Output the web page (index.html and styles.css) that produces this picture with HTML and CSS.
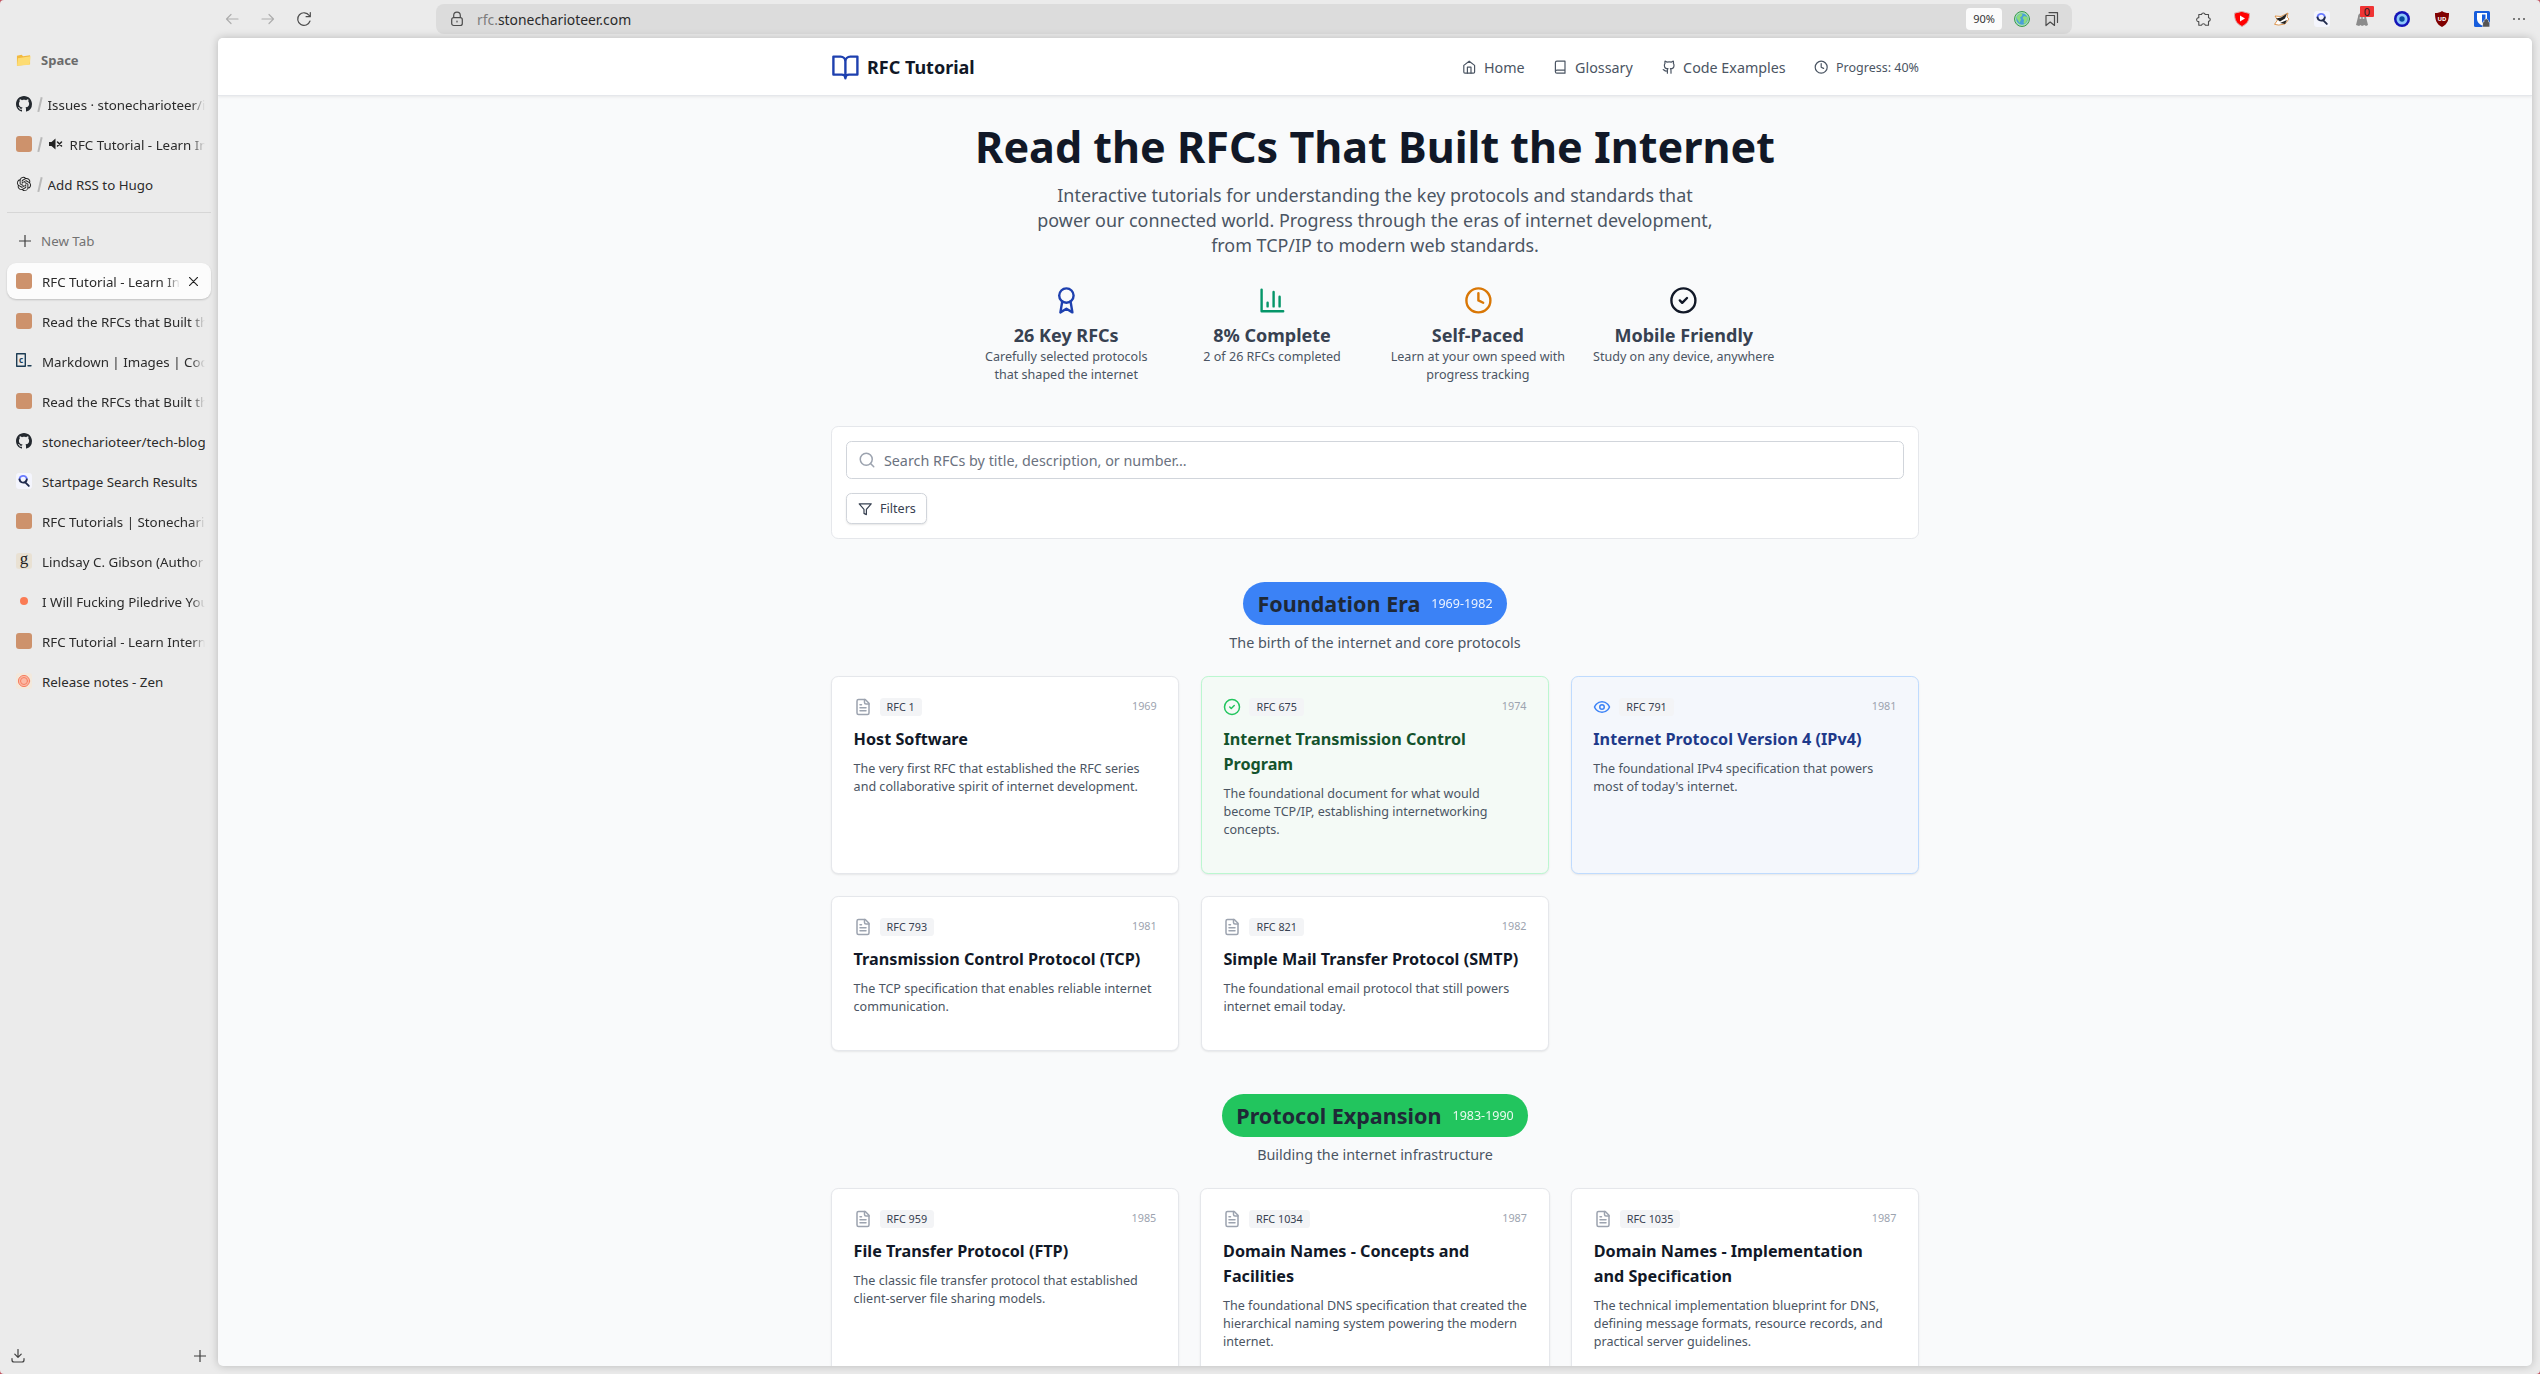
FILE: index.html
```html
<!DOCTYPE html>
<html lang="en">
<head>
<meta charset="utf-8">
<title>RFC Tutorial</title>
<link rel="stylesheet" href="styles.css">
</head>
<body>
<svg width="0" height="0" class="defs">
<symbol id="file" viewBox="0 0 24 24"><path d="M15 2H6a2 2 0 0 0-2 2v16a2 2 0 0 0 2 2h12a2 2 0 0 0 2-2V7Z"/><path d="M14 2v4a2 2 0 0 0 2 2h4M10 9H8M16 13H8M16 17H8"/></symbol>
<symbol id="check" viewBox="0 0 24 24"><circle cx="12" cy="12" r="10"/><path d="m9 12 2 2 4-4"/></symbol>
<symbol id="clock" viewBox="0 0 24 24"><circle cx="12" cy="12" r="10"/><path d="M12 6v6l4 2"/></symbol>
<symbol id="github" viewBox="0 0 16 16"><path fill="#24292f" stroke="none" d="M8 0C3.58 0 0 3.58 0 8c0 3.54 2.29 6.53 5.47 7.59.4.07.55-.17.55-.38 0-.19-.01-.82-.01-1.49-2.01.37-2.53-.49-2.69-.94-.09-.23-.48-.94-.82-1.13-.28-.15-.68-.52-.01-.53.63-.01 1.08.58 1.23.82.72 1.21 1.87.87 2.33.66.07-.52.28-.87.51-1.07-1.78-.2-3.64-.89-3.64-3.95 0-.87.31-1.59.82-2.15-.08-.2-.36-1.02.08-2.12 0 0 .67-.21 2.2.82.64-.18 1.32-.27 2-.27s1.36.09 2 .27c1.53-1.04 2.2-.82 2.2-.82.44 1.1.16 1.92.08 2.12.51.56.82 1.27.82 2.15 0 3.07-1.87 3.75-3.65 3.95.29.25.54.73.54 1.48 0 1.07-.01 1.93-.01 2.2 0 .21.15.46.55.38A8.01 8.01 0 0 0 16 8c0-4.42-3.58-8-8-8"/></symbol>
<symbol id="startpage" viewBox="0 0 16 16"><rect width="16" height="16" rx="3" fill="#f4f5fd" stroke="none"/><path d="M3.500 6.500a3.700 3.700 0 0 1 7.300-.8" stroke="#6b7cff" stroke-width="1.800"/><path d="M3.500 6.500a3.700 3.700 0 0 0 5.500 2.600l3.800 3.800M9 9.100a3.700 3.700 0 0 0 1.800-2.600" stroke="#202b4d" stroke-width="1.900"/></symbol>
</svg>
<div class="browser">
<div class="toolbar">
  <div class="navbtns">
    <svg class="i dim" viewBox="0 0 16 16"><path d="M14 8H2.500M7 3.500 2.500 8 7 12.500"/></svg>
    <svg class="i dim" viewBox="0 0 16 16"><path d="M2 8h11.500M9 3.500 13.500 8 9 12.500"/></svg>
    <svg class="i" viewBox="0 0 16 16"><path d="M13.200 4.500A6.300 6.300 0 1 0 14 10M14.300 1.500v4.200h-4.200"/></svg>
  </div>
  <div class="urlbar">
    <svg class="i lock" viewBox="0 0 16 16"><rect x="2.700" y="6.700" width="10.600" height="7.800" rx="2"/><path d="M4.700 6.500V4.500a3.300 3.300 0 0 1 6.600 0v2M8 10v1"/></svg>
    <span class="url"><span class="sub">rfc.</span>stonecharioteer.com</span>
    <span class="zoomlvl">90%</span>
    <svg class="globe" viewBox="0 0 16 16"><circle cx="8" cy="8" r="7.500" fill="#a9dfb4" stroke="#3a9a50"/><circle cx="8" cy="8" r="5.800" fill="#4a9fd8"/><path d="M2.500 7C3 4 6 2 8.500 2.500L8 5 6 6.500 7 8.500 5.500 12 4 9.500ZM10 5l3.500 1v3L11 13l-1.500-1 .5-3-1.500-2Z" fill="#8bdc7c"/></svg>
    <svg class="i" viewBox="0 0 16 16"><path d="M2 4.500h8.500v10L6.200 11 2 14.500ZM5 1.600h8.500v9.900"/></svg>
  </div>
  <div class="exts">
    <svg class="puzzle" viewBox="0 0 16 16"><path class="ln" d="M5.500 3.500a1.900 1.900 0 0 1 3.700 0h3.300v3.200h.300a1.900 1.900 0 0 1 0 3.700h-.300v3.800H9.300a1.900 1.900 0 0 0-3.700 0H2.800v-3.600a1.900 1.900 0 0 1-.500-3.800h.500V3.500Z"/></svg>
    <svg viewBox="0 0 16 16"><path fill="#f00" stroke="#d8aaaa" d="M8 .5 15.500 2.500c0 6-1.500 10-7.500 13C2 12.500.5 8.500.5 2.500Z"/><path fill="#fff" d="m6 4.500 5 3-5 3z"/></svg>
    <svg viewBox="0 0 16 16"><path d="M.8 13 3.500 9 1 5l6 .5L14 2l-1 4 2 2-4 5-6 1Z" fill="#fff" stroke="#d9822b" stroke-width=".8"/><path d="m2 7.500 5-1 6-4-2 5-5 3ZM6 12l7-3-2 4Z" fill="#222"/></svg>
    <svg viewBox="0 0 16 16"><use href="#startpage"/></svg>
    <span class="ghostbox"><svg viewBox="0 0 16 16"><path d="M2 14 4 6a4 4 0 0 1 8 0l2 8-2 1-1.500-1L8 15l-1.500-1L5 15Z" fill="#8b8b8b"/><circle cx="6.500" cy="7" r="1" fill="#ddd"/><circle cx="9.500" cy="7" r="1" fill="#ddd"/></svg><b class="count">0</b></span>
    <svg viewBox="0 0 16 16"><circle cx="8" cy="8" r="8" fill="#1414b8"/><circle cx="8" cy="8" r="5.500" fill="#8dc6fa"/><circle cx="8" cy="8" r="2.700" fill="#064a9c"/></svg>
    <svg viewBox="0 0 16 16"><path fill="#800000" d="M8 0c2 1.500 4 2 7 2 0 6-1 11-7 14C2 13 1 8 1 2 4 2 6 1.500 8 0Z"/><text x="8" y="9.500" class="ub">UD</text></svg>
    <svg viewBox="0 0 16 16"><rect width="16" height="16" rx="1.500" fill="#175ddc"/><path fill="#fff" d="M3 2h10v6c0 3-2 5-5 6.500C5 13 3 11 3 8Z"/><path fill="#175ddc" d="M8 3.500h3.500v5L8 12.500Z"/><path fill="#555" stroke="#ddd" stroke-width=".6" d="M9 11h1V9.500q2.200-3.500 4.500 0V11h1v5H9Z"/></svg>
    <svg class="dots" viewBox="0 0 16 16"><g fill="#555"><circle cx="3" cy="8" r="1"/><circle cx="8" cy="8" r="1"/><circle cx="13" cy="8" r="1"/></g></svg>
  </div>
</div>
<div class="main">
<aside class="side">
  <div class="space"><svg viewBox="0 0 16 14"><path d="M1 2.500 6 1.500 7.500 3 15 2v9.500L1 13Z" fill="#f2b93e"/><path d="m1 13 1-8 13.500-2-1 9Z" fill="#fddc73"/></svg>Space</div>
  <div class="pins">
    <div class="tab"><svg class="fav"><use href="#github"/></svg><i class="sl"></i><span class="t">Issues · stonecharioteer/iss</span></div>
    <div class="tab"><i class="fav sq"></i><i class="sl"></i><svg class="mute" viewBox="0 0 14 12"><path d="M0 4h2.500L6.500.5v11L2.500 8H0Z" fill="#222"/><path d="m8.500 4 4 4m0-4-4 4" stroke="#222" stroke-width="1.500"/></svg><span class="t">RFC Tutorial - Learn Internet</span></div>
    <div class="tab"><svg class="fav oa" viewBox="-1.500 -1.500 27 27"><path d="M22.2819 9.8211a5.9847 5.9847 0 0 0-.5157-4.9108 6.0462 6.0462 0 0 0-6.5098-2.9A6.0651 6.0651 0 0 0 4.9807 4.1818a5.9847 5.9847 0 0 0-3.9977 2.9 6.0462 6.0462 0 0 0 .7427 7.0966 5.98 5.98 0 0 0 .511 4.9107 6.051 6.051 0 0 0 6.5146 2.9001A5.9847 5.9847 0 0 0 13.2599 24a6.0557 6.0557 0 0 0 5.7718-4.2058 5.9894 5.9894 0 0 0 3.9977-2.9001 6.0557 6.0557 0 0 0-.7475-7.0729zm-9.022 12.6081a4.4755 4.4755 0 0 1-2.8764-1.0408l.1419-.0804 4.7783-2.7582a.7948.7948 0 0 0 .3927-.6813v-6.7369l2.02 1.1686a.071.071 0 0 1 .038.052v5.5826a4.504 4.504 0 0 1-4.4945 4.4944zm-9.6607-4.1254a4.4708 4.4708 0 0 1-.5346-3.0137l.142.0852 4.783 2.7582a.7712.7712 0 0 0 .7806 0l5.8428-3.3685v2.3324a.0804.0804 0 0 1-.0332.0615L9.74 19.9502a4.4992 4.4992 0 0 1-6.1408-1.6464zM2.3408 7.8956a4.485 4.485 0 0 1 2.3655-1.9728V11.6a.7664.7664 0 0 0 .3879.6765l5.8144 3.3543-2.0201 1.1685a.0757.0757 0 0 1-.071 0l-4.8303-2.7865A4.504 4.504 0 0 1 2.3408 7.872zm16.5963 3.8558L13.1038 8.364 15.1192 7.2a.0757.0757 0 0 1 .071 0l4.8303 2.7913a4.4944 4.4944 0 0 1-.6765 8.1042v-5.6772a.79.79 0 0 0-.407-.667zm2.0107-3.0231l-.142-.0852-4.7735-2.7818a.7759.7759 0 0 0-.7854 0L9.409 9.2297V6.8974a.0662.0662 0 0 1 .0284-.0615l4.8303-2.7866a4.4992 4.4992 0 0 1 6.6802 4.66zM8.3065 12.863l-2.02-1.1638a.0804.0804 0 0 1-.038-.0567V6.0742a4.4992 4.4992 0 0 1 7.3757-3.4537l-.142.0805L8.704 5.459a.7948.7948 0 0 0-.3927.6813zm1.0976-2.3654l2.602-1.4998 2.6069 1.4998v2.9994l-2.5974 1.4997-2.6067-1.4997Z"/></svg><i class="sl"></i><span class="t nf">Add RSS to Hugo</span></div>
  </div>
  <div class="newtab"><svg viewBox="0 0 12 12"><path d="M6 0v12M0 6h12"/></svg>New Tab</div>
  <div class="tab active"><i class="fav sq"></i><span class="t">RFC Tutorial - Learn Inte</span><svg class="x" viewBox="0 0 10 10"><path d="m.5.5 9 9m0-9-9 9"/></svg></div>
  <div class="tab"><i class="fav sq"></i><span class="t">Read the RFCs that Built the</span></div>
  <div class="tab"><svg class="fav" viewBox="0 0 16 16"><path d="M.700.700h8.600v12.600H.700ZM12 12.800h3" fill="none" stroke="#1c3c54" stroke-width="1.400"/><text x="5" y="10" class="cc">c</text></svg><span class="t">Markdown | Images | Codec</span></div>
  <div class="tab"><i class="fav sq"></i><span class="t">Read the RFCs that Built the</span></div>
  <div class="tab"><svg class="fav"><use href="#github"/></svg><span class="t nf">stonecharioteer/tech-blog</span></div>
  <div class="tab"><svg class="fav"><use href="#startpage"/></svg><span class="t nf">Startpage Search Results</span></div>
  <div class="tab"><i class="fav sq"></i><span class="t">RFC Tutorials | Stonechariot</span></div>
  <div class="tab"><i class="fav gr">g</i><span class="t">Lindsay C. Gibson (Author o</span></div>
  <div class="tab"><svg class="fav" viewBox="0 0 16 16"><circle cx="8" cy="8" r="4" fill="#fa7b54"/></svg><span class="t">I Will Fucking Piledrive You I</span></div>
  <div class="tab"><i class="fav sq"></i><span class="t">RFC Tutorial - Learn Internet</span></div>
  <div class="tab"><svg class="fav" viewBox="0 0 16 16"><rect width="16" height="16" rx="3" fill="#f3e9dc"/><g fill="#fbb9a4" stroke="#f77f61"><circle cx="8" cy="8" r="5.600"/><circle cx="8" cy="8" r="3.500"/></g></svg><span class="t nf">Release notes - Zen</span></div>
  <div class="bottom"><svg viewBox="0 0 14 14"><path d="M7 .500v7.500M3.800 5.200 7 8.400l3.200-3.200M1 9.500v1.500a2 2 0 0 0 2 2h8a2 2 0 0 0 2-2V9.500"/></svg><svg viewBox="0 0 12 12"><path d="M6 0v12M0 6h12"/></svg></div>
</aside>
<div class="page">
  <header class="top"><div class="wrap bar">
    <div class="brand"><svg viewBox="0 0 24 24"><path d="M2 3h6a4 4 0 0 1 4 4v14a3 3 0 0 0-3-3H2zM22 3h-6a4 4 0 0 0-4 4v14a3 3 0 0 1 3-3h7z"/></svg>RFC Tutorial</div>
    <nav>
      <a><svg viewBox="0 0 24 24"><path d="m3 9 9-7 9 7v11a2 2 0 0 1-2 2H5a2 2 0 0 1-2-2z"/><path d="M9 22V12h6v10"/></svg>Home</a>
      <a><svg viewBox="0 0 24 24"><path d="M4 19.500v-15A2.500 2.500 0 0 1 6.500 2H20v20H6.500a2.500 2.500 0 0 1 0-5H20"/></svg>Glossary</a>
      <a><svg viewBox="0 0 24 24"><path d="M15 22v-4a4.800 4.800 0 0 0-1-3.500c3 0 6-2 6-5.500.08-1.250-.27-2.480-1-3.500.28-1.150.28-2.350 0-3.500 0 0-1 0-3 1.500-2.640-.5-5.360-.5-8 0C6 2 5 2 5 2c-.3 1.150-.3 2.350 0 3.500A5.403 5.403 0 0 0 4 9c0 3.500 3 5.500 6 5.500-.39.490-.68 1.050-.85 1.650-.17.600-.22 1.230-.15 1.850v4"/><path d="M9 18c-4.510 2-5-2-7-2"/></svg>Code Examples</a>
      <a class="prog"><svg><use href="#clock"/></svg>Progress: 40%</a>
    </nav>
  </div></header>
  <main class="wrap">
    <h1>Read the RFCs That Built the Internet</h1>
    <p class="lead">Interactive tutorials for understanding the key protocols and standards that<br>power our connected world. Progress through the eras of internet development,<br>from TCP/IP to modern web standards.</p>
    <div class="stats">
      <div><svg class="blue" viewBox="0 0 24 24"><circle cx="12" cy="8" r="6"/><path d="M15.477 12.890 17 22l-5-3-5 3 1.523-9.110"/></svg><h3>26 Key RFCs</h3><p>Carefully selected protocols that shaped the internet</p></div>
      <div><svg class="green" viewBox="0 0 24 24"><path d="M3 3v18h18M18 17V9M13 17V5M8 17v-3"/></svg><h3>8% Complete</h3><p>2 of 26 RFCs completed</p></div>
      <div><svg class="amber"><use href="#clock"/></svg><h3>Self-Paced</h3><p>Learn at your own speed with progress tracking</p></div>
      <div><svg class="dark"><use href="#check"/></svg><h3>Mobile Friendly</h3><p>Study on any device, anywhere</p></div>
    </div>
    <div class="search">
      <div class="field"><svg viewBox="0 0 24 24"><circle cx="11" cy="11" r="8"/><path d="m21 21-4.300-4.300"/></svg>Search RFCs by title, description, or number...</div>
      <button class="filters"><svg viewBox="0 0 24 24"><path d="M22 3H2l8 9.460V19l4 2v-8.540Z"/></svg>Filters</button>
    </div>
    <section class="era">
      <h2 class="pill p1">Foundation Era<span>1969-1982</span></h2>
      <p class="esub">The birth of the internet and core protocols</p>
      <div class="grid g1">
        <article class="card"><div class="meta"><svg><use href="#file"/></svg><span class="tag">RFC 1</span><time>1969</time></div><h4>Host Software</h4><p>The very first RFC that established the RFC series and collaborative spirit of internet development.</p></article>
        <article class="card done"><div class="meta"><svg><use href="#check"/></svg><span class="tag">RFC 675</span><time>1974</time></div><h4>Internet Transmission Control Program</h4><p>The foundational document for what would become TCP/IP, establishing internetworking concepts.</p></article>
        <article class="card seen"><div class="meta"><svg viewBox="0 0 24 24"><path d="M2 12s3-7 10-7 10 7 10 7-3 7-10 7-10-7-10-7Z"/><circle cx="12" cy="12" r="3"/></svg><span class="tag">RFC 791</span><time>1981</time></div><h4>Internet Protocol Version 4 (IPv4)</h4><p>The foundational IPv4 specification that powers most of today's internet.</p></article>
        <article class="card"><div class="meta"><svg><use href="#file"/></svg><span class="tag">RFC 793</span><time>1981</time></div><h4>Transmission Control Protocol (TCP)</h4><p>The TCP specification that enables reliable internet communication.</p></article>
        <article class="card"><div class="meta"><svg><use href="#file"/></svg><span class="tag">RFC 821</span><time>1982</time></div><h4>Simple Mail Transfer Protocol (SMTP)</h4><p>The foundational email protocol that still powers internet email today.</p></article>
      </div>
    </section>
    <section class="era">
      <h2 class="pill p2">Protocol Expansion<span>1983-1990</span></h2>
      <p class="esub">Building the internet infrastructure</p>
      <div class="grid g2">
        <article class="card"><div class="meta"><svg><use href="#file"/></svg><span class="tag">RFC 959</span><time>1985</time></div><h4>File Transfer Protocol (FTP)</h4><p>The classic file transfer protocol that established<br>client-server file sharing models.</p></article>
        <article class="card"><div class="meta"><svg><use href="#file"/></svg><span class="tag">RFC 1034</span><time>1987</time></div><h4>Domain Names - Concepts and<br>Facilities</h4><p class="keep">The foundational DNS specification that created the<br>hierarchical naming system powering the modern<br>internet.</p></article>
        <article class="card"><div class="meta"><svg><use href="#file"/></svg><span class="tag">RFC 1035</span><time>1987</time></div><h4>Domain Names - Implementation<br>and Specification</h4><p>The technical implementation blueprint for DNS,<br>defining message formats, resource records, and<br>practical server guidelines.</p></article>
      </div>
    </section>
  </main>
</div>
</div>
</div>
</body>
</html>
```
FILE: styles.css
```css
*{box-sizing:border-box;margin:0;padding:0}
html,body{height:100%;overflow:hidden;background:#c2525f}
body{font-family:"Noto Sans",sans-serif;color:#111827}
.defs{position:absolute}
svg{fill:none;stroke-linecap:round;stroke-linejoin:round;flex:none}
.browser{height:1374px;width:2540px;background:#ebebeb;border-radius:4px;display:flex;flex-direction:column}
.toolbar{height:38px;flex:none;display:flex;align-items:center}
.i{width:16px;height:16px;stroke:#4c4c4c;stroke-width:1.2}
.dim{stroke:#aeaeae}
.navbtns{width:436px;padding-left:224px;display:flex;gap:20px}
.urlbar{width:1636px;height:30px;border-radius:8px;background:#dcdcdc;display:flex;align-items:center;padding:0 12px 0 13px}
.url{font-size:13.9px;margin-left:12px;flex:1;color:#2a2a2a}
.sub{color:#7d7d7d}
.zoomlvl{width:36px;height:22px;border-radius:4px;background:#fbfbfb;font-size:11px;line-height:22px;text-align:center;margin-right:12px;color:#333}
.globe{width:16px;height:16px;margin-right:14px}
.exts{margin-left:124px;display:flex;gap:24px}
.exts svg{width:16px;height:16px;display:block}
.exts .puzzle{margin-right:-2px}
.exts .dots{margin-left:-3px}
.ln{stroke:#4c4c4c;stroke-width:1.1}
.ghostbox{position:relative}
.count{position:absolute;left:6px;top:-5px;width:14px;height:11px;background:#f03434;font:11px/11px "Noto Sans",sans-serif;text-align:center;border-radius:1px;color:#222}
.ub{font:bold 6px "Noto Sans",sans-serif;fill:#fff;text-anchor:middle}
.main{flex:1;display:flex;min-height:0;padding:0 8px 8px 0}
.side{width:218px;padding:5px 7px 0;display:flex;flex-direction:column;font-size:13.33px;color:#2b2b2b}
.space{height:34px;padding-left:9px;display:flex;align-items:center;font-size:13px;font-weight:700;color:#6b6b6b}
.space svg{width:15px;height:14px;margin-right:10px}
.pins{margin-top:9px;padding-bottom:7px;border-bottom:1px solid #d6d6d6;height:127px}
.tab{height:36px;margin-bottom:4px;display:flex;align-items:center;padding:0 6px 0 9px;flex:none}
.fav{width:16px;height:16px;margin-right:10px;flex:none}
.sq{background:#cd926c;border-radius:3px}
.sl{width:1.6px;height:15px;background:#b9b9b9;transform:rotate(13deg);margin:0 7px 0 -3px}
.t{white-space:nowrap;overflow:hidden;flex:1;line-height:24px;padding-top:2px;-webkit-mask-image:linear-gradient(to left,transparent,#000 14px);mask-image:linear-gradient(to left,transparent,#000 14px)}
.nf{-webkit-mask-image:none;mask-image:none}
.mute{width:14px;height:12px;margin:0 7px 0 1px}
.oa path{fill:#222}
.newtab{height:36px;margin-top:10px;margin-bottom:4px;display:flex;align-items:center;padding-left:12px;color:#727272}
.newtab svg,.bottom svg{stroke:#3f3f3f;stroke-width:1.2;width:12px;height:12px}
.newtab svg{margin-right:10px}
.active{background:#fcfcfc;border-radius:9px;box-shadow:0 1px 2px rgba(0,0,0,.18);padding-right:13px}
.x{width:9px;height:9px;stroke:#222;stroke-width:1.3;margin-left:9px}
.cc{font:bold 8px "Noto Sans",sans-serif;fill:#1c3c54;text-anchor:middle}
.gr{background:#e9e1d3;border-radius:3px;font:17px/12px "Liberation Serif",serif;text-align:center;color:#222}
.bottom{margin-top:auto;margin-bottom:3px;display:flex;justify-content:space-between;align-items:center;padding:0 5px 0 4px}
.bottom svg:first-child{width:14px;height:14px}
.page{flex:1;background:#f9fafb;border-radius:5px;box-shadow:0 0 8px rgba(0,0,0,.22);overflow:hidden}
.wrap{width:1088px;margin:0 auto}
.top{background:#fff;height:58px;border-bottom:1px solid #e5e7eb;box-shadow:0 1px 3px rgba(0,0,0,.08)}
.bar{height:58px;display:flex;align-items:center;justify-content:space-between}
.brand{display:flex;align-items:center;font-size:18px;font-weight:700;gap:7.2px}
.brand svg{width:28.8px;height:28.8px;stroke:#1e40af;stroke-width:2}
nav{display:flex;gap:28.8px;align-items:center;color:#4b5563}
nav a{display:flex;align-items:center;gap:7.2px;font-size:14.3px}
nav svg{width:14.4px;height:14.4px;stroke:#4b5563;stroke-width:2}
nav .prog{font-size:12.5px}
h1{font-size:43.1px;line-height:43.2px;text-align:center;margin-top:29px;font-weight:700}
.lead{font-size:17.92px;line-height:25.2px;color:#4b5563;text-align:center;margin-top:14.4px}
.stats{width:806.4px;margin:27.5px auto 0;display:grid;grid-template-columns:repeat(4,1fr);gap:17px;text-align:center}
.stats svg{width:28.8px;height:28.8px;stroke-width:2;display:block;margin:0 auto 7.2px}
.blue{stroke:#1e40af}.green{stroke:#059669}.amber{stroke:#d97706}.dark{stroke:#111827}
h3{font-size:18px;line-height:26.5px;font-weight:700;color:#374151}
.stats p{font-size:12.55px;line-height:18px;color:#4b5563}
.search{height:112.7px;margin-top:42.1px;background:#fff;border:1px solid #e5e7eb;border-radius:7.2px;padding:14px 14.4px}
.field{height:38px;border:1px solid #d1d5db;border-radius:5.4px;display:flex;align-items:center;padding-left:10.5px;gap:8px;font-size:14.35px;color:#6b7280}
.field svg{width:18px;height:18px;stroke:#9ca3af;stroke-width:2}
.filters{margin-top:14px;height:31px;width:81px;border:1px solid #d1d5db;border-radius:5.4px;background:#fff;box-shadow:0 1px 2px rgba(0,0,0,.1);display:flex;align-items:center;padding-left:11px;gap:7.2px;font:12.6px "Noto Sans",sans-serif;color:#374151}
.filters svg{width:14.4px;height:14.4px;stroke:#374151;stroke-width:2}
.era{display:flex;flex-direction:column;align-items:center;margin-top:43.2px}
.pill{height:43px;border-radius:22px;padding:0 14.4px;display:flex;align-items:center;gap:11px;font-size:21.55px;font-weight:700;color:#1f2937}
.pill span{font-size:12.5px;font-weight:400;color:#fff;opacity:.9}
.p1{background:#3b82f6}.p2{background:#22c55e}
.esub{font-size:14.35px;line-height:22px;color:#4b5563;margin-top:7px}
.grid{margin-top:21.4px;align-self:stretch;display:grid;grid-template-columns:repeat(3,1fr);gap:21.6px}
.g1{grid-template-rows:198.5px 155.5px}.g2{grid-template-rows:198.5px}
.card{background:#fff;border:1px solid #e5e7eb;border-radius:7.2px;padding:21.6px;box-shadow:0 1px 2px rgba(0,0,0,.08)}
.meta{display:flex;align-items:center;height:18px}
.meta svg{width:18px;height:18px;stroke:#9ca3af;stroke-width:2;margin-right:8px}
.tag{background:#f3f4f6;border-radius:3.6px;font-size:10.8px;line-height:18px;padding:0 7px;color:#374151}
time{margin-left:auto;font-size:10.8px;color:#9ca3af;line-height:16px;align-self:flex-start}
h4{font-size:16.2px;line-height:25px;font-weight:700;margin-top:11px;white-space:normal}
.card p{font-size:12.55px;line-height:18px;color:#4b5563;margin-top:7.5px}
.keep{white-space:nowrap}
.done{background:#f4faf6;border-color:#bbf7d0}.done h4{color:#14532d}.done .meta svg{stroke:#22c55e}
.seen{background:#f4f7fc;border-color:#bfdbfe}.seen h4{color:#1e3a8a}.seen .meta svg{stroke:#3b82f6}
```
